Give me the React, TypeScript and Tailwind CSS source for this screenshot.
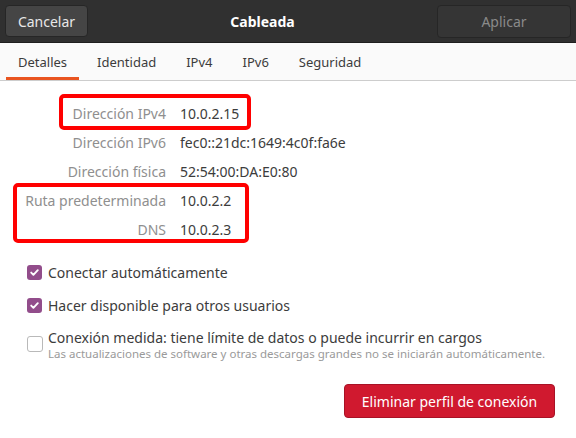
import React from 'react';

const font = { fontFamily: '"Noto Sans", "DejaVu Sans", sans-serif' };

const Check: React.FC<{ checked: boolean }> = ({ checked }) =>
    checked ? (
        <span className="flex h-[15px] w-[15px] shrink-0 items-center justify-center rounded-[3px] bg-[#924d8b]">
            <svg width="11" height="11" viewBox="0 0 11 11" fill="none">
                <path d="M2.2 5.6 L4.4 7.8 L8.8 3.2" stroke="white" strokeWidth="1.9" strokeLinecap="round" strokeLinejoin="round" />
            </svg>
        </span>
    ) : (
        <span className="block h-[16px] w-[16px] shrink-0 rounded-[3px] border border-[#b9b9b9] bg-white" />
    );

const Row: React.FC<{ label: string; value: string }> = ({ label, value }) => (
    <div className="flex h-[29px] items-center">
        <span className="w-[166px] shrink-0 text-right text-[#8f8f8f]">{label}</span>
        <span className="ml-[14px] text-[#3c3c3c]">{value}</span>
    </div>
);

const App: React.FC = () => {
    const tabs = ['Detalles', 'Identidad', 'IPv4', 'IPv6', 'Seguridad'];

    return (
        <div className="flex h-[438px] w-[576px] flex-col overflow-hidden bg-white text-[14px]" style={font}>
            {/* barra de título */}
            <div className="flex h-[43px] items-center justify-between border-b border-[#1f1f1f] bg-[#303030] px-[5px]">
                <button className="h-[32px] w-[83px] rounded-[4px] border border-[#262626] bg-[#454545] text-[#e8e8e8]">Cancelar</button>
                <span className="font-bold text-white">Cableada</span>
                <button className="h-[33px] w-[134px] rounded-[4px] border border-[#262626] bg-[#353535] text-[#8a8a8a]">Aplicar</button>
            </div>

            {/* pestañas */}
            <div className="flex h-[38px] border-b border-[#cdcdcd] bg-[#fafafa] pl-[6px] text-[13px]">
                {tabs.map((t, i) => (
                    <div
                        key={t}
                        className={
                            'flex items-center px-[12px] text-[#3c3c3c] ' +
                            (i === 0 ? 'border-b-[3px] border-[#e95420] pt-[5px]' : 'ml-[6px] pt-[2px]')
                        }
                    >
                        {t}
                    </div>
                ))}
            </div>

            <div className="flex flex-1 flex-col pt-[18px]">
                <div className="flex flex-col">
                    <div className="relative">
                        <Row label="Dirección IPv4" value="10.0.2.15" />
                        <div className="absolute left-[59px] top-[-5px] h-[36px] w-[192px] rounded-[5px] border-4 border-[#ff0000]" />
                    </div>
                    <Row label="Dirección IPv6" value="fec0::21dc:1649:4c0f:fa6e" />
                    <Row label="Dirección física" value="52:54:00:DA:E0:80" />
                    <div className="relative">
                        <Row label="Ruta predeterminada" value="10.0.2.2" />
                        <Row label="DNS" value="10.0.2.3" />
                        <div className="absolute left-[13px] top-[-3px] h-[60px] w-[236px] rounded-[5px] border-4 border-[#ff0000]" />
                    </div>
                </div>

                <div className="mt-[18px] flex flex-col gap-[13px] pl-[27px] text-[#3c3c3c]">
                    <label className="flex h-[20px] items-center gap-[6px]">
                        <Check checked />
                        <span>Conectar automáticamente</span>
                    </label>
                    <label className="flex h-[20px] items-center gap-[6px]">
                        <Check checked />
                        <span>Hacer disponible para otros usuarios</span>
                    </label>
                    <label className="mt-[1px] flex items-start gap-[5px]">
                        <span className="mt-[7px] block"><Check checked={false} /></span>
                        <span className="flex flex-col">
                            <span className="leading-[18px]">Conexión medida: tiene límite de datos o puede incurrir en cargos</span>
                            <span className="text-[11.5px] leading-[13px] text-[#9a9a9a]">
                                Las actualizaciones de software y otras descargas grandes no se iniciarán automáticamente.
                            </span>
                        </span>
                    </label>
                </div>

                <div className="mt-auto mb-[20px] flex justify-end pr-[21px]">
                    <button className="h-[34px] w-[211px] rounded-[4px] border border-[#a81226] bg-[#d0192f] text-white">
                        Eliminar perfil de conexión
                    </button>
                </div>
            </div>
        </div>
    );
};

export default App;
